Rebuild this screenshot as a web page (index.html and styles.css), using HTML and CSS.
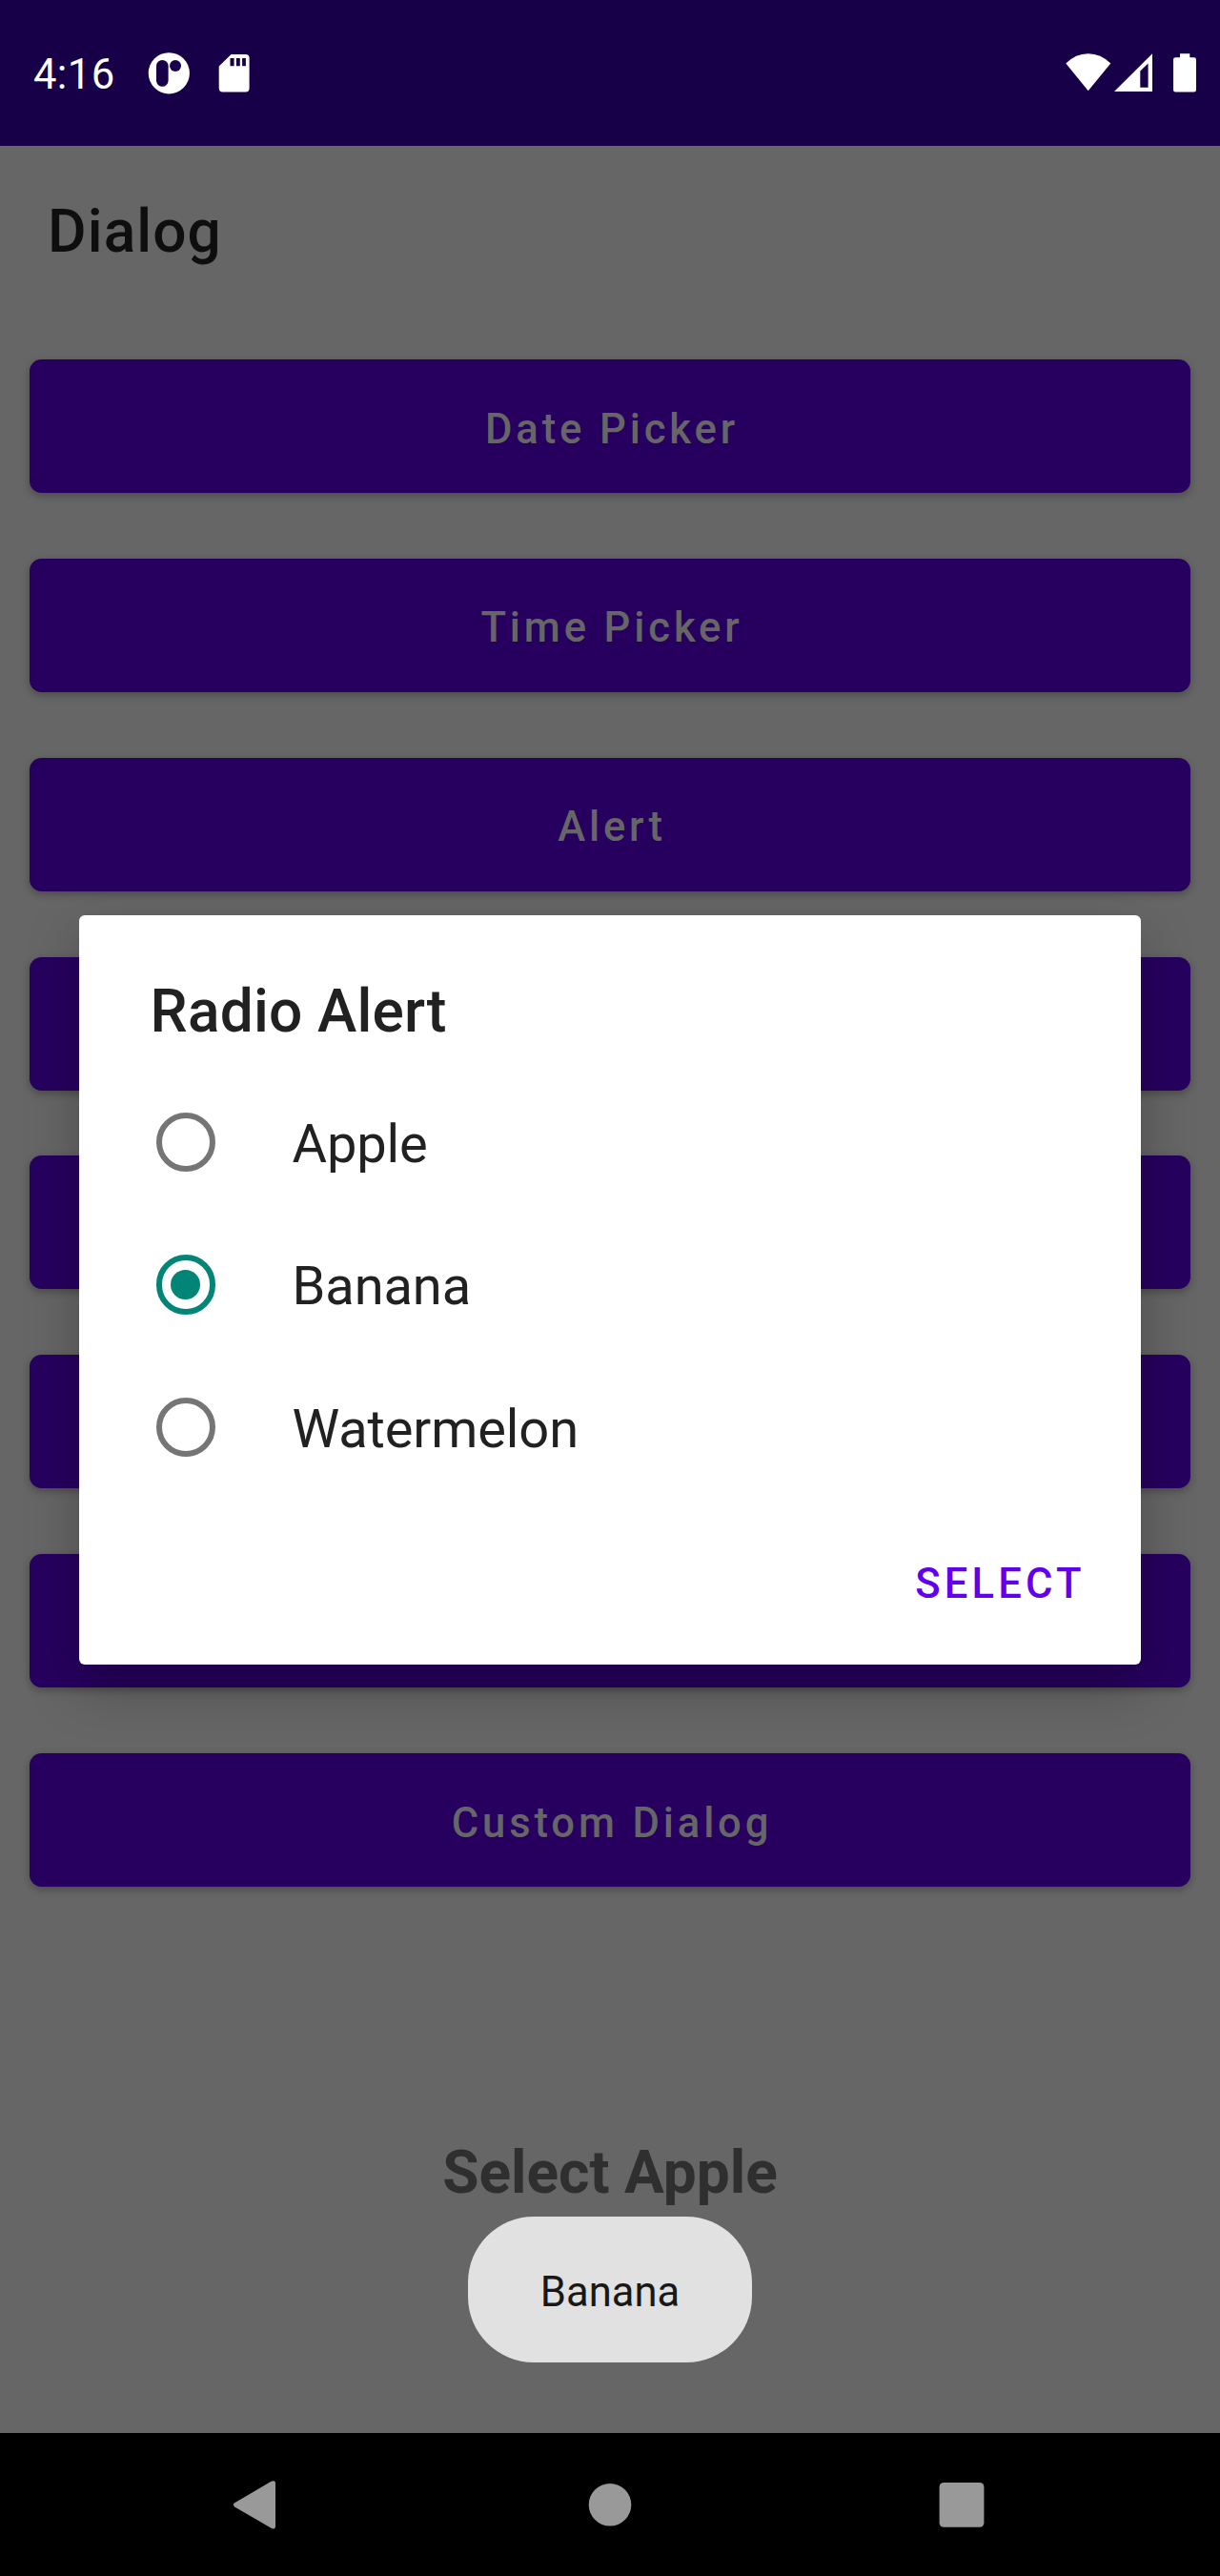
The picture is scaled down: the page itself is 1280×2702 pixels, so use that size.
FILE: index.html
```html
<!DOCTYPE html>
<html lang="en">
<head>
<meta charset="utf-8">
<title>Dialog</title>
<link rel="stylesheet" href="styles.css">
</head>
<body>
<div class="screen">
  <header class="status">
    <span class="clock">4:16</span>
    <svg class="notifications" width="104" height="60" viewBox="150 46 104 60" overflow="visible">
      <circle cx="177.3" cy="76.8" r="21.6" fill="#fff"/>
      <rect x="164" y="63" width="12.6" height="27.8" rx="6.3" fill="#170048"/>
      <circle cx="184" cy="69" r="6" fill="#170048"/>
      <path fill="#fff" fill-rule="evenodd" d="M242.6 57H257.6Q261.6 57 261.6 61V92.6Q261.6 96.6 257.6 96.6H233.7Q229.7 96.6 229.7 92.6V69.6ZM241.5 61V69.2H245.6V61ZM247.9 61V69.2H251.8V61ZM254.1 61V69.2H257.9V61Z"/>
    </svg>
    <svg class="system" width="144" height="60" viewBox="1114 46 144 60">
      <g fill="#fff">
        <path d="M1118.3 66.6Q1128.5 56.3 1141.7 56.3T1165.3 66.6L1141.7 95.2Z"/>
        <path fill-rule="evenodd" d="M1169 96L1209 56.3V96ZM1196.3 74.5V91.8H1204.6V66.5Z"/>
        <path d="M1238 56.2H1248.3V60.2H1252.6Q1255 60.2 1255 62.6V94.2Q1255 96.6 1252.6 96.6H1233.4Q1231 96.6 1231 94.2V62.6Q1231 60.2 1233.4 60.2H1238Z"/>
      </g>
    </svg>
  </header>
  <main class="page">
    <h1 class="title">Dialog</h1>
    <div class="buttons">
      <button class="btn">Date Picker</button>
      <button class="btn">Time Picker</button>
      <button class="btn">Alert</button>
      <button class="btn"></button>
      <button class="btn"></button>
      <button class="btn"></button>
      <button class="btn"></button>
      <button class="btn">Custom Dialog</button>
    </div>
    <p class="result">Select Apple</p>
  </main>
  <nav class="nav">
    <svg width="1280" height="150" viewBox="0 2552 1280 150">
      <g fill="#999">
        <path d="M246.2 2625.2L284.5 2602.8Q289 2600.8 289 2605V2649.5Q289 2653.8 284.5 2651.8L246.2 2629.4Q243.6 2627.3 246.2 2625.2Z"/>
        <circle cx="640" cy="2627.3" r="22.3"/>
        <rect x="985.6" y="2604" width="46.8" height="46.8" rx="4.5"/>
      </g>
    </svg>
  </nav>
  <section class="dialog">
    <h2 class="dialog-title">Radio Alert</h2>
    <div class="option"><span class="radio"></span><span class="label">Apple</span></div>
    <div class="option"><span class="radio checked"></span><span class="label">Banana</span></div>
    <div class="option"><span class="radio"></span><span class="label">Watermelon</span></div>
    <div class="actions"><span class="select">SELECT</span></div>
  </section>
  <div class="toast">Banana</div>
</div>
</body>
</html>
```
FILE: styles.css
```css
* { box-sizing: border-box; margin: 0; padding: 0; }

body { font-family: Roboto, sans-serif; background: #666; }

.screen {
  position: relative;
  display: flex;
  flex-direction: column;
  width: 1280px;
  height: 2702px;
  overflow: hidden;
  background: #666;
}

.status {
  display: flex;
  align-items: flex-start;
  height: 153px;
  padding: 46px 22px 0 35px;
  background: #170048;
  color: #fff;
}
.clock {
  width: 115px;
  padding-top: 1px;
  font-size: 43.56px;
  line-height: 63px;
  letter-spacing: 0.4px;
}
.system { margin-left: auto; }

.page { flex: 1; }
.title {
  height: 224px;
  padding: 54px 0 0 50px;
  font-size: 62.2px;
  line-height: 72px;
  font-weight: 500;
  letter-spacing: 1.1px;
  color: #0e0e0e;
}
.buttons {
  display: flex;
  flex-direction: column;
  gap: 68.86px;
  padding: 0 31px;
}
.btn {
  height: 140px;
  border: 0;
  border-radius: 12.4px;
  background: #27005f;
  box-shadow: 0 3px 8px rgba(0, 0, 0, 0.28);
  color: #666;
  font: 500 43.56px/51px Roboto, sans-serif;
  letter-spacing: 0.0893em;
  padding: 6px 0 0 4px;
}
.result {
  margin-top: 263px;
  text-align: center;
  font-size: 62.2px;
  line-height: 73px;
  font-weight: 700;
  color: #2f2f2f;
}

.nav { height: 150px; background: #000; }
.nav svg { display: block; }

.dialog {
  position: absolute;
  left: 83px;
  top: 960px;
  width: 1114.3px;
  height: 785.5px;
  padding: 64px 0 0;
  border-radius: 6px;
  background: #fff;
  box-shadow: 0 24px 56px rgba(0, 0, 0, 0.26);
  color: #212121;
}
.dialog-title {
  padding-left: 74.6px;
  height: 99.4px;
  font-size: 62.2px;
  line-height: 73px;
  font-weight: 500;
  letter-spacing: 0.2px;
}
.option {
  display: flex;
  align-items: center;
  gap: 80.5px;
  height: 149.33px;
  padding-left: 80.6px;
  font-size: 56px;
  line-height: 66px;
}
.label { padding-top: 4px; letter-spacing: -0.1px; }
.radio {
  display: flex;
  align-items: center;
  justify-content: center;
  width: 62.4px;
  height: 62.4px;
  border: 6.2px solid #757575;
  border-radius: 50%;
}
.checked { border-color: #018577; }
.checked::after {
  content: "";
  width: 31.2px;
  height: 31.2px;
  border-radius: 50%;
  background: #018577;
}
.actions {
  display: flex;
  justify-content: flex-end;
  padding: 65px 58.5px 0 0;
}
.select {
  font-size: 43.56px;
  line-height: 51px;
  font-weight: 500;
  letter-spacing: 4.2px;
  color: #6200ee;
}

.toast {
  position: absolute;
  left: 491.3px;
  top: 2325px;
  width: 297.4px;
  height: 152.5px;
  border-radius: 69px;
  background: #e1e1e1;
  color: #181818;
  font-size: 43.56px;
  line-height: 159px;
  text-align: center;
}
```
